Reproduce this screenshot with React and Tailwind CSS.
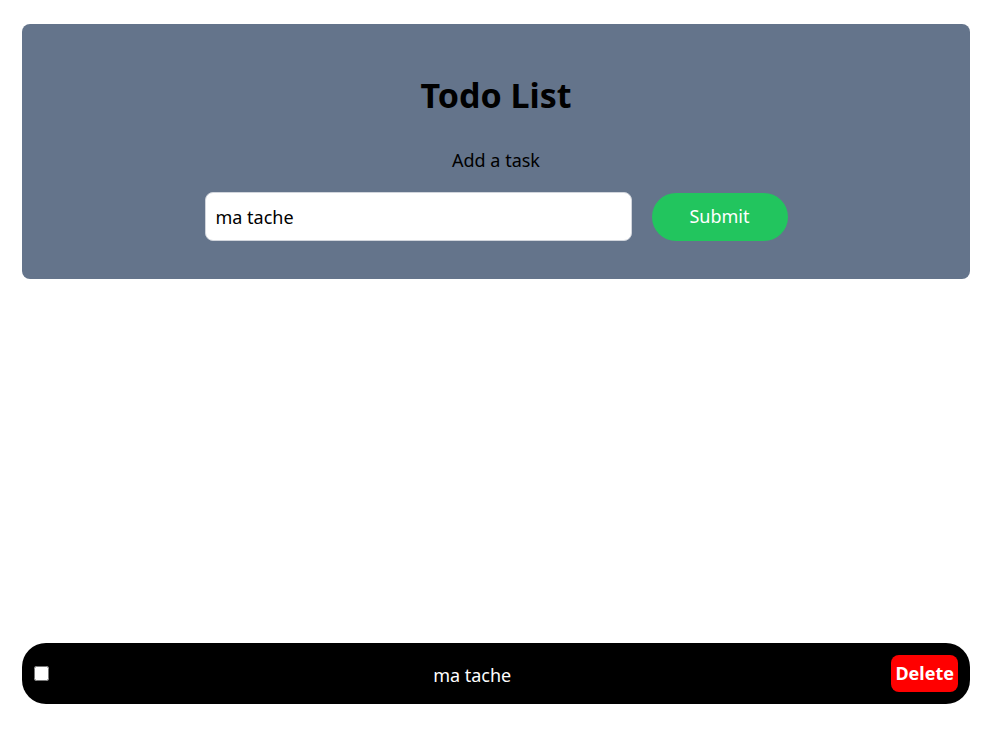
import React, { useState } from "react";

const App = () => {
  const [task, setTask] = useState("ma tache");
  const [todos, setTodos] = useState([{ id: 1, text: "ma tache", done: false }]);

  const addTodo = (e) => {
    e.preventDefault();
    if (!task.trim()) return;
    setTodos((prev) => [...prev, { id: Date.now(), text: task, done: false }]);
  };

  const toggle = (id) =>
    setTodos((prev) => prev.map((t) => (t.id === id ? { ...t, done: !t.done } : t)));

  const remove = (id) => setTodos((prev) => prev.filter((t) => t.id !== id));

  return (
    <div
      className="min-h-screen bg-white px-[22px] pt-6"
      style={{ fontFamily: '"Noto Sans", "Open Sans", sans-serif' }}
    >
      {/* Header form */}
      <div className="bg-[#64748b] rounded-lg pt-[51px] pb-[38px] flex flex-col items-center">
        <h1 className="text-[34px] font-bold text-black leading-[40px]">Todo List</h1>
        <form onSubmit={addTodo} className="flex flex-col items-center mt-[33px]">
          <label className="text-[18px] text-black leading-6">Add a task</label>
          <div className="flex items-center gap-5 mt-5">
            <input
              value={task}
              onChange={(e) => setTask(e.target.value)}
              className="w-[427px] h-[49px] bg-white rounded-lg border border-gray-300 px-[10px] text-[18px] text-black outline-none"
            />
            <button
              type="submit"
              className="w-[136px] h-[48px] rounded-full bg-[#22c55e] text-white text-[18px]"
            >
              Submit
            </button>
          </div>
        </form>
      </div>

      {/* Todo items */}
      <ul className="mt-[364px]">
        {todos.map((t) => (
          <li
            key={t.id}
            className="bg-black rounded-3xl h-[61px] flex items-center pl-[8px] pr-3"
          >
            <input
              type="checkbox"
              checked={t.done}
              onChange={() => toggle(t.id)}
              className="w-[15px] h-[15px] m-1"
            />
            <span
              className={`flex-1 mt-[4px] text-center text-white text-[18px] ${t.done ? "line-through" : ""}`}
            >
              {t.text}
            </span>
            <button
              onClick={() => remove(t.id)}
              className="bg-[#ff0000] text-white font-bold text-[18px] rounded-lg px-[4px] h-[37px]"
            >
              Delete
            </button>
          </li>
        ))}
      </ul>
    </div>
  );
};

export default App;
